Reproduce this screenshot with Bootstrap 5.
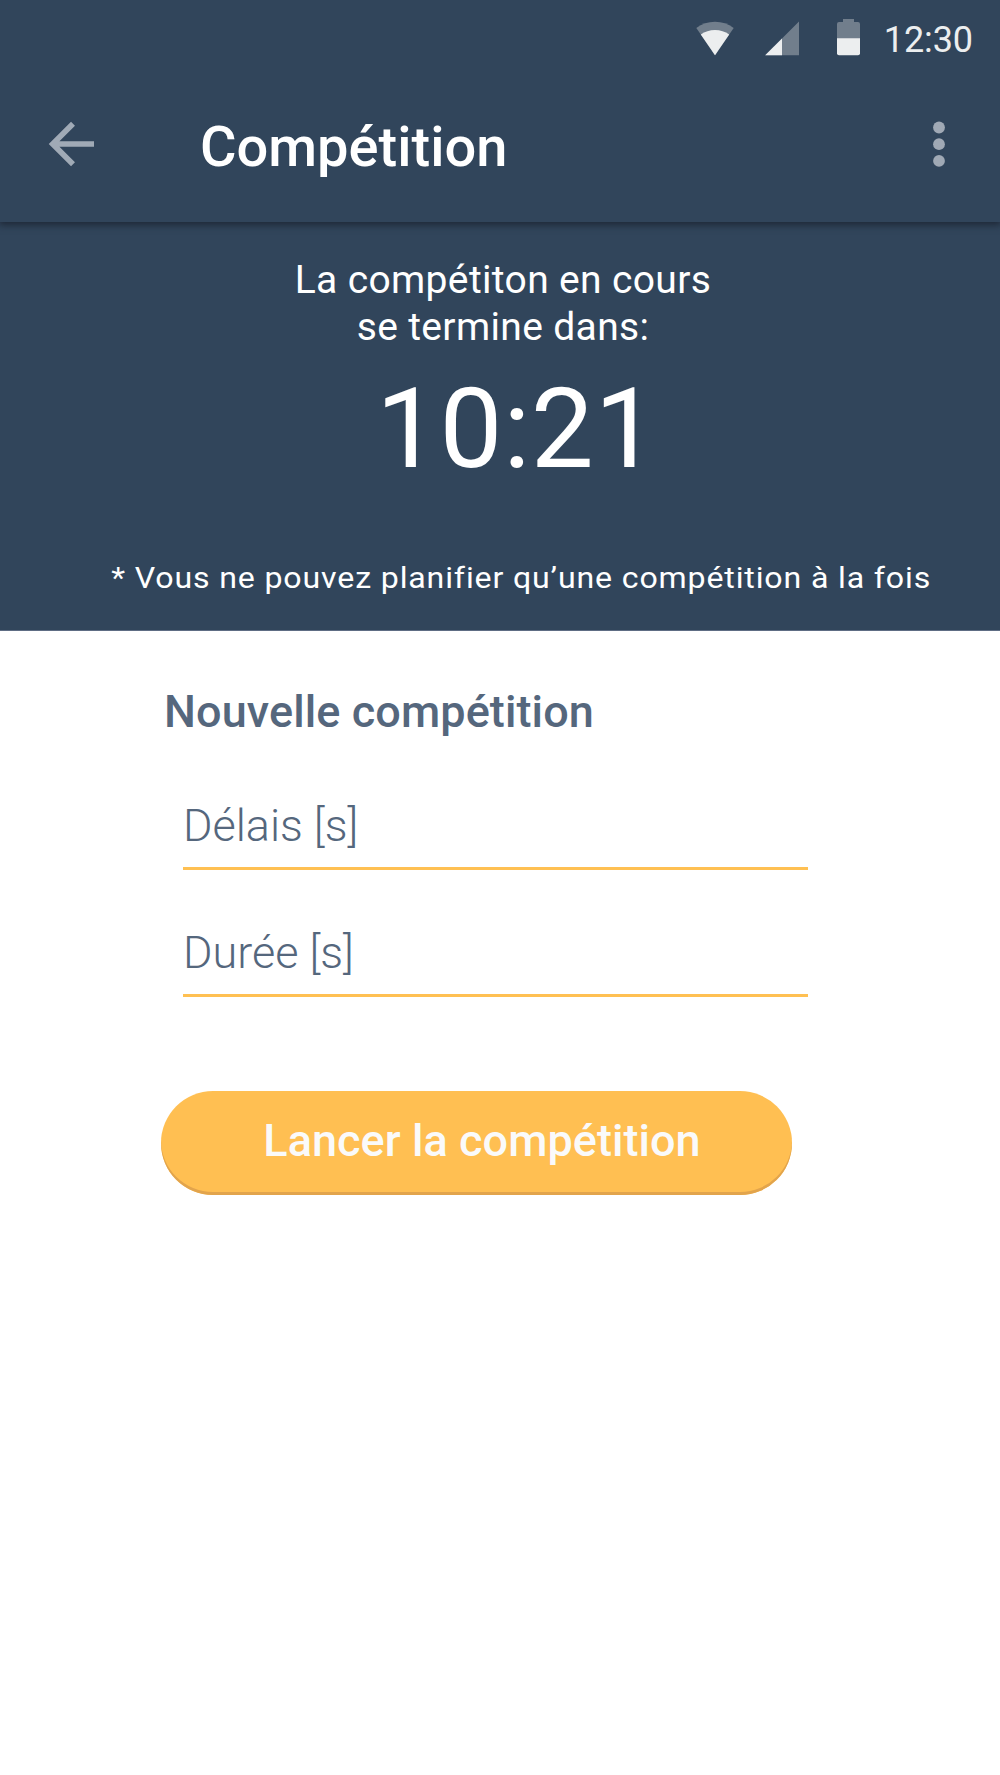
<!DOCTYPE html>
<html lang="fr">
<head>
<meta charset="utf-8">
<meta name="viewport" content="width=device-width, initial-scale=1">
<title>Compétition</title>
<link href="https://cdn.jsdelivr.net/npm/bootstrap@5.3.0/dist/css/bootstrap.min.css" rel="stylesheet">
<style>
body{font-family:Roboto,sans-serif;background:#fff;min-height:1775px;overflow-x:hidden}
svg{display:block;flex:none}
.navy{background:#31455b;color:#fff}
.topzone{position:relative;box-shadow:0 2px 7px 1px rgba(20,25,35,.65)}
.statusbar{height:80px;padding-right:27px}
.wifi{margin-right:31px}
.signal{margin-right:38px}
.battery{margin-right:24px}
.clock{font-size:36px;line-height:80px;color:#eceeef;letter-spacing:-.1px}
.appbar{height:142px;padding:0 55px 14px 48px}
.apptitle{font-size:56px;font-weight:500;line-height:64px;letter-spacing:0;margin:0 0 0 106px;padding-top:6px;white-space:nowrap}
.iconbtn{border:0;padding:0;line-height:0}
.hero{height:409px;border-bottom:1px solid #5e6d84}
.intro{font-size:39px;line-height:47px;letter-spacing:.35px;padding:35px 0 0 6px}
.timer{font-size:112px;line-height:120px;letter-spacing:.6px;margin-top:18px;padding-left:34px}
.hint{font-size:30px;line-height:36px;letter-spacing:.8px;margin-top:71px;padding-left:43px;white-space:nowrap}
.hint span{display:inline-block;transform:scaleX(1.07)}
.formzone{padding:55px 0 0 161px}
.formtitle{font-size:45px;line-height:52px;font-weight:500;letter-spacing:.1px;color:#55677d;margin:0 0 60px 3px}
.fields{width:625px;margin-left:22px}
.field{font-size:45px;font-weight:300;line-height:54px;letter-spacing:0;border:0;border-bottom:3px solid #ffc052;border-radius:0;padding:0 0 14px;color:#55677d;background:transparent;height:72px}
.field::placeholder{color:#55677d;opacity:1}
.field + .field{margin-top:55px}
.launch,.launch:hover{width:631px;height:104px;background:#ffbf52;color:#fafafa;font-size:45px;font-weight:500;letter-spacing:.05px;line-height:54px;border:0;padding:0 0 5px 11px;margin-top:94px;box-shadow:inset 0 -3px #e2a44c}
</style>
</head>
<body>
<header class="navy topzone">
<div class="statusbar d-flex justify-content-end">
<svg class="wifi" width="38" height="60" viewBox="0 0 38 60"><path fill="#717e8c" d="M19 55.2L.3 28Q8.500 21.800 19 21.800T37.700 28z"/><path fill="#eceeef" d="M19 55.200L4.800 34.400Q11 29.900 19 29.900T33.200 34.400z"/></svg>
<svg class="signal" width="34" height="60" viewBox="0 0 34 60"><path fill="#717e8c" d="M.2 55.300L34 21.500V55.300z"/><path fill="#eceeef" d="M.2 55.300L17 38.500V55.300z"/></svg>
<svg class="battery" width="23" height="60" viewBox="0 0 23 60"><path fill="#717e8c" d="M6 19h11v3h4q2 0 2 2v15H0V24q0-2 2-2h4z"/><path fill="#eceeef" d="M0 38.300h23v15q0 2-2 2H2q-2 0-2-2z"/></svg>
<span class="clock">12:30</span>
</div>
<nav class="appbar d-flex align-items-center">
<button class="btn iconbtn" aria-label="Retour"><svg width="46" height="46" viewBox="0 0 46 46"><path d="M46 23H5M25 2.700L4.700 23 25 43.300" fill="none" stroke="#a0aab6" stroke-width="5.600"/></svg></button>
<h1 class="apptitle">Compétition</h1>
<button class="btn iconbtn ms-auto" aria-label="Menu"><svg width="12" height="46" viewBox="0 0 12 46" fill="#a0a9b5"><circle cx="6" cy="6.500" r="5.900"/><circle cx="6" cy="23.200" r="5.900"/><circle cx="6" cy="39.900" r="5.900"/></svg></button>
</nav>
</header>
<section class="navy hero text-center">
<p class="intro m-0">La compétiton en cours<br>se termine dans:</p>
<div class="timer">10:21</div>
<p class="hint mb-0"><span>* Vous ne pouvez planifier qu’une compétition à la fois</span></p>
</section>
<main class="formzone">
<h2 class="formtitle">Nouvelle compétition</h2>
<form>
<div class="fields">
<input class="form-control field" placeholder="Délais [s]" aria-label="Délais [s]">
<input class="form-control field" placeholder="Durée [s]" aria-label="Durée [s]">
</div>
<button type="button" class="btn launch rounded-pill">Lancer la compétition</button>
</form>
</main>
<script src="https://cdn.jsdelivr.net/npm/bootstrap@5.3.0/dist/js/bootstrap.bundle.min.js"></script>
</body>
</html>
